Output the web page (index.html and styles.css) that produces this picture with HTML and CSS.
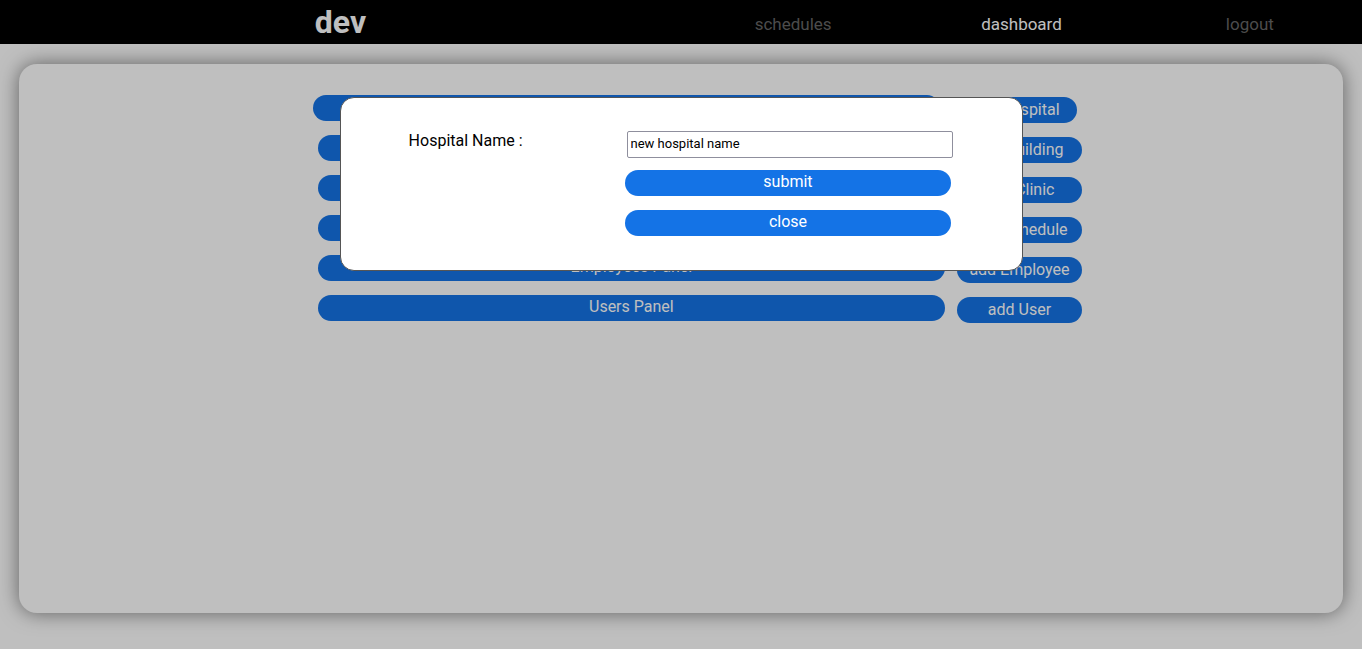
FILE: index.html
```
<!DOCTYPE html>
<html lang="en">
<head>
<meta charset="utf-8">
<meta name="viewport" content="width=device-width, initial-scale=1">
<title>dev</title>
<link rel="stylesheet" href="styles.css">
</head>
<body>
<header class="navbar">
  <h1 class="brand">dev</h1>
  <nav class="nav-links">
    <a class="nav-link" href="#schedules">schedules</a>
    <a class="nav-link active" href="#dashboard">dashboard</a>
    <a class="nav-link" href="#logout">logout</a>
  </nav>
</header>
<main class="card">
  <div class="panels">
    <div class="panel-row first"><button class="btn" type="button">Hospitals Panel</button><button class="btn btn-add" type="button">add Hospital</button></div>
    <div class="panel-row"><button class="btn" type="button">Buildings Panel</button><button class="btn btn-add" type="button">add Building</button></div>
    <div class="panel-row"><button class="btn" type="button">Clinics Panel</button><button class="btn btn-add" type="button">add Clinic</button></div>
    <div class="panel-row"><button class="btn" type="button">Schedules Panel</button><button class="btn btn-add" type="button">add Schedule</button></div>
    <div class="panel-row"><button class="btn" type="button">Employees Panel</button><button class="btn btn-add" type="button">add Employee</button></div>
    <div class="panel-row"><button class="btn" type="button">Users Panel</button><button class="btn btn-add" type="button">add User</button></div>
  </div>
</main>
<div class="overlay">
  <form class="modal" role="dialog" aria-label="Add hospital">
    <label class="modal-label" for="hospital-name">Hospital Name :</label>
    <div class="modal-fields">
      <input class="modal-input" id="hospital-name" type="text" value="new hospital name">
      <div class="modal-actions">
        <button class="btn" type="button">submit</button>
        <button class="btn" type="button">close</button>
      </div>
    </div>
  </form>
</div>
</body>
</html>
```
FILE: styles.css
```
* {
  box-sizing: border-box;
}

body {
  margin: 0;
  min-height: 100vh;
  display: flex;
  flex-direction: column;
  background: #fff;
  font-family: Roboto, "Liberation Sans", sans-serif;
  font-size: 16px;
  color: #000;
}

.navbar {
  display: grid;
  grid-template-columns: 1fr 1fr;
  align-items: center;
  height: 44px;
  background: #000;
  position: relative;
  z-index: 1;
}

.brand {
  margin: 0;
  font-size: 32px;
  line-height: 44px;
  text-align: center;
  color: #fff;
}

.nav-links {
  display: grid;
  grid-template-columns: repeat(3, 1fr);
  gap: 4px;
  padding-top: 4px;
}

.nav-link {
  font-size: 17px;
  line-height: 40px;
  text-align: center;
  text-decoration: none;
  color: #666;
}

.nav-link.active {
  color: #fff;
}

.card {
  flex: 1;
  margin: 20px 19px 36px;
  padding-top: 31px;
  border-radius: 18px;
  box-shadow: 0 0 20px rgba(0, 0, 0, 0.5);
}

.panels {
  display: grid;
  gap: 12px;
  width: 58.1%;
  margin-left: 22.2%;
}

.panel-row {
  display: grid;
  grid-template-columns: 5fr 1fr;
  gap: 12px;
  padding-left: 5px;
}

.panel-row.first {
  padding: 0 5px 0 0;
}

.btn {
  display: block;
  width: 100%;
  height: 26px;
  padding: 0 0 2px;
  border: 0;
  border-radius: 13px;
  background: #1473e6;
  font: inherit;
  line-height: 24px;
  color: #fff;
  white-space: nowrap;
}

.btn-add {
  margin-top: 2px;
  padding: 0;
  line-height: 26px;
}

.overlay {
  position: fixed;
  inset: 0;
  z-index: 2;
  display: flex;
  justify-content: center;
  align-items: flex-start;
  padding-top: 15vh;
  background: rgba(0, 0, 0, 0.25);
}

.modal {
  display: grid;
  grid-template-columns: 2fr 3fr;
  width: calc(50% + 2px);
  padding: 33px 5% 34px;
  border: 1px solid #555;
  border-radius: 14px;
  background: #fff;
}

.modal-label {
  line-height: 20px;
}

.modal-input {
  display: block;
  width: 100%;
  height: 27px;
  padding: 0 3px 2px;
  border: 1px solid #8f8f9d;
  border-radius: 2px;
  background: #fff;
  font: inherit;
  font-size: 13px;
  color: #000;
}

.modal-actions {
  display: grid;
  gap: 14px;
  margin: 12px 2px 0 -2px;
}
```
